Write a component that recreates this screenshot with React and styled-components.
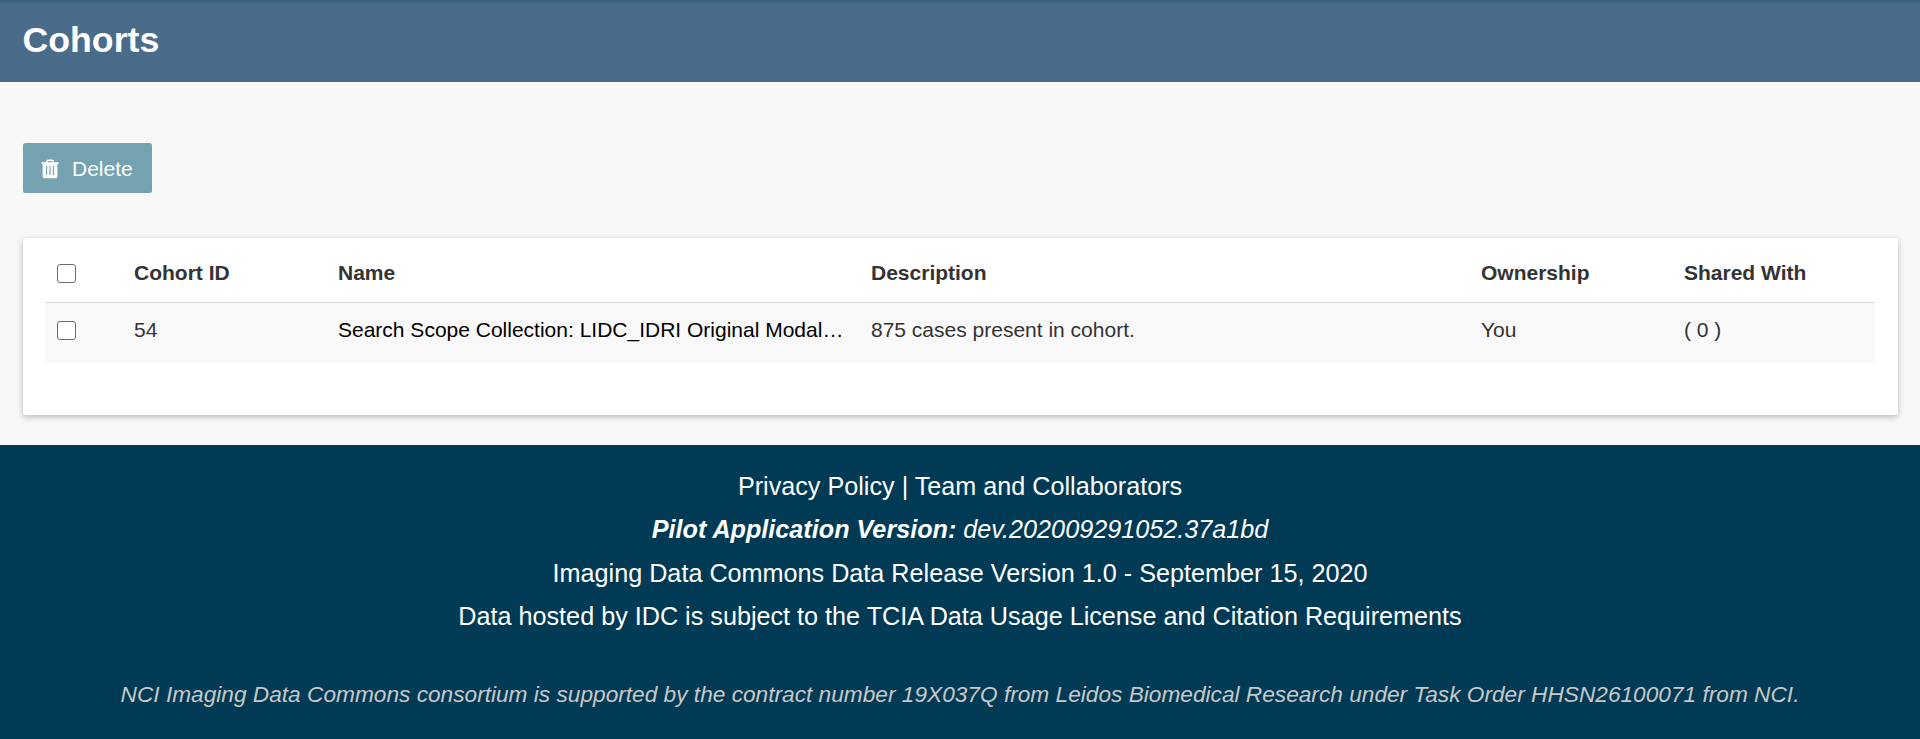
import React from "react";
import styled, { createGlobalStyle } from "styled-components";

const GlobalStyle = createGlobalStyle`
  * { box-sizing: border-box; }
  body {
    margin: 0;
    background: #f8f8f8;
    color: #333;
    font-family: "Liberation Sans", Arial, sans-serif;
    font-size: 21px;
  }
`;

const Page = styled.div`
  display: flex;
  flex-direction: column;
  height: 739px;
  overflow: hidden;
`;

const Header = styled.header`
  flex: none;
  height: 82px;
  padding: 0 22.5px;
  background: linear-gradient(#355f7a, #4a6b8a 5px);
`;

const Title = styled.h1`
  margin: 0;
  font-size: 35.7px;
  line-height: 80px;
  color: #fff;
`;

const Main = styled.main`
  flex: none;
  display: flex;
  flex-direction: column;
  align-items: flex-start;
  height: 363px;
  padding: 61px 22px 0 23px;
`;

const DeleteButton = styled.button`
  display: flex;
  align-items: center;
  gap: 13px;
  width: 129px;
  height: 50px;
  padding: 2px 0 0 18px;
  border: 0;
  border-radius: 2.5px;
  background: #74a2b0;
  color: #fff;
  font: inherit;

  svg {
    margin-top: -1px;
  }
`;

const Card = styled.section`
  width: 100%;
  height: 177px;
  margin-top: 45px;
  padding: 0 23px 0 22px;
  border-radius: 3px;
  background: #fff;
  box-shadow: 0 2px 6px rgba(0, 0, 0, 0.26);
`;

const Row = styled.div`
  display: grid;
  grid-template-columns: 79px 204px 533px 610px 203px 1fr;
  height: ${(p) => (p.$head ? 65 : 60)}px;
  padding-top: ${(p) => (p.$head ? 20 : 12)}px;
  border-bottom: ${(p) => (p.$head ? "1px solid #ddd" : "0")};
  background: ${(p) => (p.$head ? "#fff" : "#f9f9f9")};
  font-weight: ${(p) => (p.$head ? 700 : 400)};
`;

const Cell = styled.div`
  padding: 0 10px;
  line-height: 30px;
  color: ${(p) => (p.$link ? "#000" : "inherit")};
  white-space: nowrap;
`;

const Checkbox = styled.input.attrs({ type: "checkbox" })`
  appearance: none;
  display: block;
  width: 19px;
  height: 19px;
  margin: 6px 0 0 2px;
  border: 1px solid #6c6c6c;
  border-radius: 3px;
  background: #fff;
`;

const Footer = styled.footer`
  flex: 1;
  padding-top: 20px;
  background: #003a54;
  color: #fff;
  font-size: 25.2px;
  text-align: center;
`;

const FooterLine = styled.p`
  margin: 0;
  line-height: 43.3px;
  font-style: ${(p) => (p.$italic ? "italic" : "normal")};
`;

const Funding = styled.p`
  margin: 36px 0 0;
  font-size: 22.68px;
  line-height: 40px;
  font-style: italic;
  color: #c8c8c8;
`;

const TrashIcon = () => (
  <svg width="18" height="20" viewBox="0 0 18 20" fill="none">
    <path d="M5.6 3.4C5.6 1.8 6.4 1.2 7.5 1.2h3c1.1 0 1.9.6 1.9 2.2" stroke="#fff" strokeWidth="1.5" />
    <path d="M.5 3.2h17v1.8H.5z" fill="#fff" />
    <path
      fillRule="evenodd"
      d="M1.6 4.5h14.8V17c0 1.6-.8 2.3-2 2.3H3.6c-1.2 0-2-.7-2-2.3zM5 7v9h1.1V7zM8.4 7v9h1.1V7zM11.8 7v9h1.1V7z"
      fill="#fff"
    />
  </svg>
);

const cohorts = [
  {
    id: "54",
    name: "Search Scope Collection: LIDC_IDRI Original Modal…",
    description: "875 cases present in cohort.",
    owner: "You",
    shared: "( 0 )",
  },
];

export default function App() {
  return (
    <Page>
      <GlobalStyle />
      <Header>
        <Title>Cohorts</Title>
      </Header>
      <Main>
        <DeleteButton>
          <TrashIcon />
          Delete
        </DeleteButton>
        <Card>
          <Row $head>
            <Cell><Checkbox aria-label="Select all" /></Cell>
            <Cell>Cohort ID</Cell>
            <Cell>Name</Cell>
            <Cell>Description</Cell>
            <Cell>Ownership</Cell>
            <Cell>Shared With</Cell>
          </Row>
          {cohorts.map((c) => (
            <Row key={c.id}>
              <Cell><Checkbox aria-label={c.id} /></Cell>
              <Cell>{c.id}</Cell>
              <Cell $link>{c.name}</Cell>
              <Cell>{c.description}</Cell>
              <Cell>{c.owner}</Cell>
              <Cell>{c.shared}</Cell>
            </Row>
          ))}
        </Card>
      </Main>
      <Footer>
        <FooterLine>Privacy Policy | Team and Collaborators</FooterLine>
        <FooterLine $italic>
          <strong>Pilot Application Version:</strong> dev.202009291052.37a1bd
        </FooterLine>
        <FooterLine>Imaging Data Commons Data Release Version 1.0 - September 15, 2020</FooterLine>
        <FooterLine>
          Data hosted by IDC is subject to the TCIA Data Usage License and Citation Requirements
        </FooterLine>
        <Funding>
          NCI Imaging Data Commons consortium is supported by the contract number 19X037Q from
          Leidos Biomedical Research under Task Order HHSN26100071 from NCI.
        </Funding>
      </Footer>
    </Page>
  );
}
